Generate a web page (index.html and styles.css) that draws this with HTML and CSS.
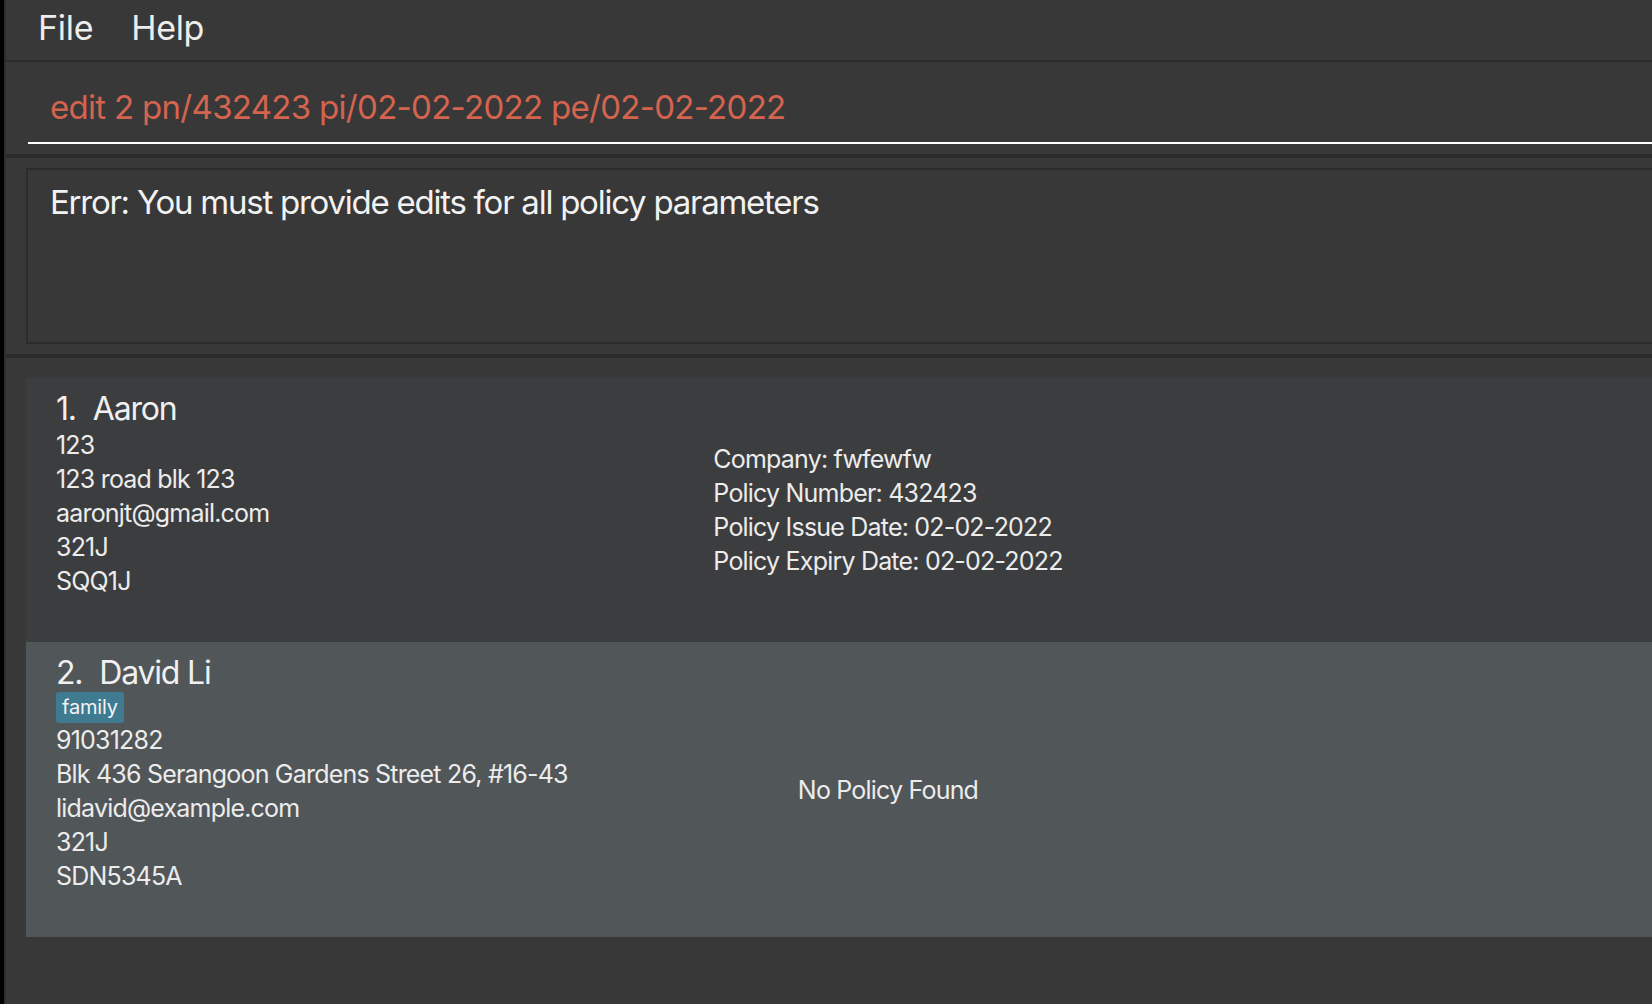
FILE: index.html
```html
<!DOCTYPE html>
<html>
<head>
<meta charset="utf-8">
<link rel="stylesheet" href="styles.css">
</head>
<body>
<div class="app">
  <div class="menubar">
    <span class="menu-item file">File</span>
    <span class="menu-item help">Help</span>
  </div>
  <div class="command-pane">
    <div class="command-field">edit 2 pn/432423 pi/02-02-2022 pe/02-02-2022</div>
  </div>
  <div class="result-pane">
    <div class="result-box">Error: You must provide edits for all policy parameters</div>
  </div>
  <div class="list-pane">
    <div class="card">
      <div class="info">
        <div class="name"><span class="index">1.</span>Aaron</div>
        <div class="line">123</div>
        <div class="line">123 road blk 123</div>
        <div class="line">aaronjt@gmail.com</div>
        <div class="line">321J</div>
        <div class="line">SQQ1J</div>
      </div>
      <div class="policy">
        <div class="policy-box">
          <div class="line">Company: fwfewfw</div>
          <div class="line">Policy Number: 432423</div>
          <div class="line">Policy Issue Date: 02-02-2022</div>
          <div class="line">Policy Expiry Date: 02-02-2022</div>
        </div>
      </div>
    </div>
    <div class="card selected">
      <div class="info">
        <div class="name"><span class="index">2.</span>David Li</div>
        <div class="tags"><span class="tag">family</span></div>
        <div class="line">91031282</div>
        <div class="line">Blk 436 Serangoon Gardens Street 26, #16-43</div>
        <div class="line">lidavid@example.com</div>
        <div class="line">321J</div>
        <div class="line">SDN5345A</div>
      </div>
      <div class="policy">
        <div class="policy-box">
          <div class="line">No Policy Found</div>
        </div>
      </div>
    </div>
  </div>
</div>
</body>
</html>
```

FILE: styles.css
```css
html, body {
  margin: 0;
  padding: 0;
  height: 100%;
  background: #383838;
  overflow: hidden;
}

body {
  border-left: 4px solid #000;
  font-family: "Inter", "Liberation Sans", sans-serif;
  color: #ececec;
}

.app {
  border-left: 2px solid #2e2e2e;
  height: 100%;
  display: flex;
  flex-direction: column;
  background: #383838;
}

.menubar {
  border-bottom: 2px solid #2b2b2b;
  display: flex;
  align-items: flex-start;
  padding-top: 8px;
  box-sizing: border-box;
  height: 62px;
}

.menu-item {
  font-size: 34px;
  line-height: 40px;
  color: #ededed;
  letter-spacing: -0.3px;
}

.menu-item.file {
  margin-left: 32px;
}

.menu-item.help {
  margin-left: 38px;
}

.command-pane {
  padding: 25px 0 10px 22px;
  border-bottom: 4px solid #2b2b2b;
}

.command-field {
  font-size: 33px;
  line-height: 40px;
  color: #d4644f;
  padding: 0 0 15px 22px;
  border-bottom: 2px solid #ffffff;
  white-space: nowrap;
  letter-spacing: -0.7px;
}

.result-pane {
  padding: 10px 0 10px 20px;
  border-bottom: 4px solid #2b2b2b;
}

.result-box {
  height: 176px;
  box-sizing: border-box;
  border: 2px solid #2b2b2b;
  border-right: none;
  padding: 12px 0 0 22px;
  font-size: 33px;
  line-height: 40px;
  color: #f2f2f2;
  letter-spacing: -1.25px;
  white-space: nowrap;
}

.list-pane {
  flex: 1;
  padding: 20px 0 0 20px;
}

.card {
  display: grid;
  grid-template-columns: 564px 596px;
  background: #3c3d3f;
}

.card.selected {
  background: #515659;
}

.info {
  padding: 12px 0 44px 30px;
}

.name {
  font-size: 32px;
  line-height: 37px;
  margin-bottom: 1px;
  color: #f0f0f0;
  letter-spacing: -1.2px;
  white-space: nowrap;
}

.index {
  margin-right: 17px;
}

.line {
  font-size: 25px;
  line-height: 34px;
  white-space: nowrap;
  letter-spacing: -0.8px;
}

.tags {
  display: flex;
}

.tag {
  background: #3e7b91;
  border-radius: 3px;
  font-size: 20px;
  line-height: 31px;
  padding: 0 6px;
  color: #f4f4f4;
  letter-spacing: -0.2px;
}

.policy {
  display: flex;
  align-items: center;
  justify-content: center;
}
```
